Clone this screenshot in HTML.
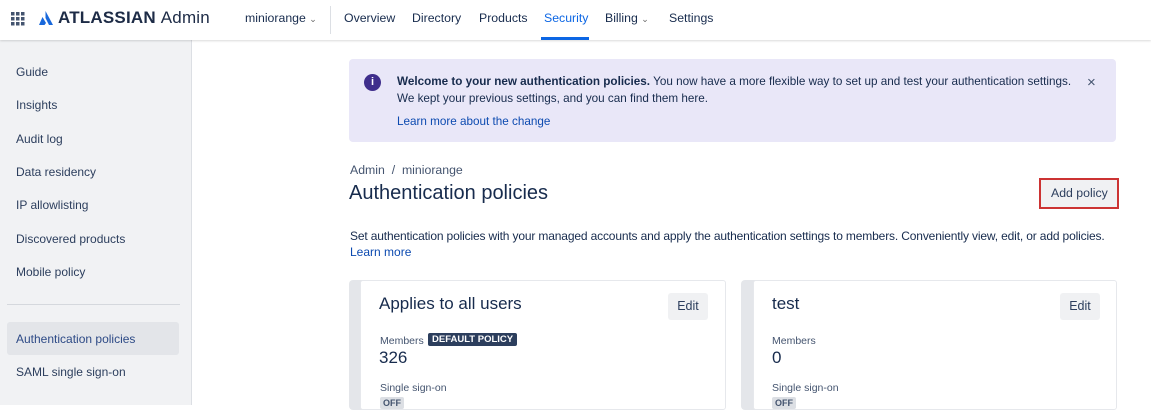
<!DOCTYPE html>
<html><head><meta charset="utf-8"><style>
*{margin:0;padding:0;box-sizing:border-box}
body{width:1151px;height:405px;overflow:hidden;background:#fff;font-family:"Liberation Sans",sans-serif;color:#172b4d;position:relative}
.a{position:absolute;white-space:nowrap}
.top{position:absolute;left:0;top:0;width:1151px;height:40px;background:#fff;box-shadow:0 1px 2px rgba(0,0,0,.15);z-index:2}
.nav{font-size:12.3px;color:#172b4d;top:11px}
.side{position:absolute;left:0;top:40px;width:192px;height:365px;background:#f1f2f4;border-right:1px solid #dcdfe4}
.si{position:absolute;left:16px;font-size:12px;color:#2c3e5d}
.card{position:absolute;top:280px;height:130px;background:#e4e6ea;border-radius:4px}
.card .w{position:absolute;left:11px;top:0;right:0;bottom:0;background:#fff;border:1px solid #e6e8ec;border-radius:3px}
.edit{position:absolute;width:40px;height:27px;background:#f0f1f3;border-radius:3px;font-size:12.5px;text-align:center;line-height:27px;color:#2c3e5d}
.lbl{position:absolute;font-size:10.5px;color:#44546f}
.num{position:absolute;font-size:17px;color:#172b4d}
.off{position:absolute;font-size:9px;font-weight:bold;background:#dcdfe4;padding:1px 3px;border-radius:2px;color:#44546f}
.bt{font-size:11.7px;letter-spacing:0}
</style></head><body>
<div class="top">
<svg class="a" style="left:11px;top:12px" width="14" height="14" viewBox="0 0 14 14" fill="#44546f"><rect x="0" y="0" width="3.5" height="3.5"/><rect x="5" y="0" width="3.5" height="3.5"/><rect x="10" y="0" width="3.5" height="3.5"/><rect x="0" y="5" width="3.5" height="3.5"/><rect x="5" y="5" width="3.5" height="3.5"/><rect x="10" y="5" width="3.5" height="3.5"/><rect x="0" y="10" width="3.5" height="3.5"/><rect x="5" y="10" width="3.5" height="3.5"/><rect x="10" y="10" width="3.5" height="3.5"/></svg>
<svg class="a" style="left:38px;top:10px" width="16" height="16" viewBox="0 0 16 16"><path d="M7.5 1 L15 15 L11 15 L7.5 8 Z" fill="#1868db"/><path d="M4.5 7 L8 13 L6.5 15 L1 15 Z" fill="#1868db"/></svg>
<div class="a" style="left:58px;top:8px;font-size:17px;font-weight:bold;color:#1d2b46;letter-spacing:.2px">ATLASSIAN <span style="font-weight:normal">Admin</span></div>
<div class="a nav" style="left:245px">miniorange <span style="font-size:9px;color:#666">&#8964;</span></div>
<div class="a" style="left:330px;top:6px;width:1px;height:28px;background:#dcdfe4"></div>
<div class="a nav" style="left:344px">Overview</div>
<div class="a nav" style="left:412px">Directory</div>
<div class="a nav" style="left:479px">Products</div>
<div class="a nav" style="left:544px;color:#0c66e4">Security</div>
<div class="a" style="left:541px;top:37px;width:48px;height:3px;background:#0c66e4"></div>
<div class="a nav" style="left:605px">Billing <span style="font-size:9px;color:#666">&#8964;</span></div>
<div class="a nav" style="left:669px">Settings</div>
</div>
<div class="side">
<div class="si" style="top:25px">Guide</div>
<div class="si" style="top:58px">Insights</div>
<div class="si" style="top:92px">Audit log</div>
<div class="si" style="top:125px">Data residency</div>
<div class="si" style="top:158px">IP allowlisting</div>
<div class="si" style="top:192px">Discovered products</div>
<div class="si" style="top:225px">Mobile policy</div>
<div class="a" style="left:7px;top:264px;width:173px;height:1px;background:#d5d8dd"></div>
<div class="a" style="left:7px;top:282px;width:172px;height:33px;background:#e3e5e9;border-radius:3px"></div>
<div class="si" style="top:292px;color:#2d4a86">Authentication policies</div>
<div class="si" style="top:325px">SAML single sign-on</div>
</div>
<div class="a" style="left:349px;top:59px;width:767px;height:83px;background:#e9e7f8;border-radius:4px"></div>
<div class="a" style="left:364px;top:74px;width:17px;height:17px;border-radius:50%;background:#3f2e8c;color:#fff;font-size:11px;font-weight:bold;text-align:center;line-height:17px">i</div>
<div class="a bt" style="left:397px;top:75px;color:#172b4d"><b>Welcome to your new authentication policies.</b> You now have a more flexible way to set up and test your authentication settings.</div>
<div class="a bt" style="left:397px;top:92px;color:#172b4d">We kept your previous settings, and you can find them here.</div>
<div class="a bt" style="left:397px;top:115px;color:#0c4ab0">Learn more about the change</div>
<div class="a" style="left:1087px;top:74px;font-size:15px;color:#44546f">&#215;</div>
<div class="a" style="left:350px;top:163px;font-size:12.3px;color:#44546f">Admin &nbsp;/&nbsp; miniorange</div>
<div class="a" style="left:349px;top:182px;font-size:20px;color:#172b4d">Authentication policies</div>
<div class="a" style="left:1039px;top:178px;width:80px;height:31px;border:2px solid #c33;background:#f0f1f3"></div>
<div class="a" style="left:1051px;top:186px;font-size:12.3px;color:#2c3e5d">Add policy</div>
<div class="a bt" style="left:350px;top:229px;color:#172b4d;font-size:12px;letter-spacing:-.15px">Set authentication policies with your managed accounts and apply the authentication settings to members. Conveniently view, edit, or add policies.</div>
<div class="a bt" style="left:350px;top:245px;color:#0c4ab0;font-size:12px">Learn more</div>
<div class="card" style="left:349px;width:377px"><div class="w"></div>
<div class="a" style="left:30px;top:14px;font-size:17px">Applies to all users</div>
<div class="edit" style="left:319px;top:13px">Edit</div>
<div class="lbl" style="left:31px;top:55px">Members</div>
<div class="a" style="left:79px;top:53px;background:#2c3e5d;color:#fff;font-size:9.5px;font-weight:bold;padding:1px 4px;border-radius:2px">DEFAULT POLICY</div>
<div class="num" style="left:30px;top:68px">326</div>
<div class="lbl" style="left:31px;top:102px">Single sign-on</div>
<div class="off" style="left:31px;top:117px">OFF</div>
</div>
<div class="card" style="left:741px;width:376px"><div class="w" style="left:12px"></div>
<div class="a" style="left:31px;top:14px;font-size:17px">test</div>
<div class="edit" style="left:319px;top:13px">Edit</div>
<div class="lbl" style="left:31px;top:55px">Members</div>
<div class="num" style="left:31px;top:68px">0</div>
<div class="lbl" style="left:31px;top:102px">Single sign-on</div>
<div class="off" style="left:31px;top:117px">OFF</div>
</div>
</body></html>
